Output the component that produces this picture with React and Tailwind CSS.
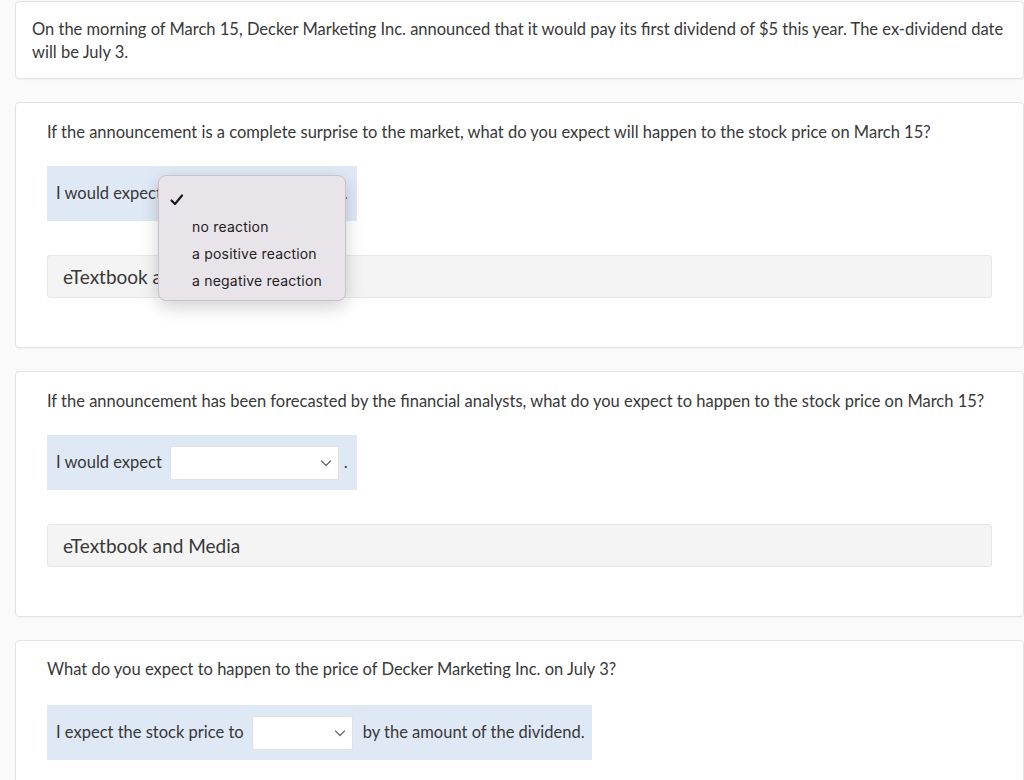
import React from 'react';

const Chevron = () => (
    <svg width="14" height="14" viewBox="0 0 14 14" className="absolute right-[5px] top-1/2 -translate-y-1/2" fill="none">
        <path d="M2.5 5 L7 9.5 L11.5 5" stroke="#666" strokeWidth="1.2" strokeLinecap="round" strokeLinejoin="round" />
    </svg>
);

const Select = ({ width }) => (
    <div className={`relative h-[34px] ${width} bg-white border border-[#e2e2e2] rounded-[2px]`}>
        <Chevron />
    </div>
);

const Card = ({ children, className = '' }) => (
    <div className={`relative bg-white border border-[#e3e3e3] rounded-[4px] shadow-[0_1px_2px_rgba(0,0,0,0.04)] ${className}`}>
        {children}
    </div>
);

const Media = () => (
    <div className="mt-[34px] mr-[31px] h-[43px] flex items-center pl-[15px] bg-[#f4f4f4] border border-[#e6e6e6] rounded-[3px] text-[19px] text-[#383838]">
        eTextbook and Media
    </div>
);

const Popup = () => (
    <div className="absolute left-[142px] top-[72px] w-[188px] h-[126px] bg-[#e9e4ea] border border-[#c8c3cb] rounded-[8px] shadow-[0_6px_18px_rgba(0,0,0,0.18)] pt-[10px] z-10 font-['Inter',sans-serif] text-[14px] text-[#222] tracking-[0.2px]">
        <div className="h-[27px] flex items-center pl-[10px]">
            <svg width="16" height="16" viewBox="0 0 16 16" fill="none">
                <path d="M2.5 8.5 L6 12 L13 3.5" stroke="#1a1a1a" strokeWidth="2.2" strokeLinecap="round" strokeLinejoin="round" />
            </svg>
        </div>
        {['no reaction', 'a positive reaction', 'a negative reaction'].map(t => (
            <div key={t} className="h-[27px] flex items-center pl-[33px]">{t}</div>
        ))}
    </div>
);

export default function App() {
    return (
        <div className="min-h-[780px] bg-[#fafafa] pl-[15px] pt-px flex flex-col gap-[23px] font-['Lato',sans-serif] text-[16.5px] leading-[23px] text-[#383838] overflow-hidden">
            <Card className="pl-[16px] pr-[12px] pt-[16px] pb-[14px]">
                <p>On the morning of March 15, Decker Marketing Inc. announced that it would pay its first dividend of $5 this year. The ex-dividend date will be July 3.</p>
            </Card>

            <Card className="pl-[31px] pt-[18px] pb-[49px]">
                <p>If the announcement is a complete surprise to the market, what do you expect will happen to the stock price on March 15?</p>
                <div className="mt-[22px] inline-flex items-center h-[55px] w-[310px] bg-[#dfe8f5] pl-[9px]">
                    <span>I would expect</span>
                    <div className="ml-[8px]"><Select width="w-[169px]" /></div>
                    <span className="ml-[5px]">.</span>
                </div>
                <Media />
                <Popup />
            </Card>

            <Card className="pl-[31px] pt-[18px] pb-[49px]">
                <p>If the announcement has been forecasted by the financial analysts, what do you expect to happen to the stock price on March 15?</p>
                <div className="mt-[22px] inline-flex items-center h-[55px] w-[310px] bg-[#dfe8f5] pl-[9px]">
                    <span>I would expect</span>
                    <div className="ml-[8px]"><Select width="w-[169px]" /></div>
                    <span className="ml-[5px]">.</span>
                </div>
                <Media />
            </Card>

            <Card className="pl-[31px] pt-[17px] pb-[40px]">
                <p>What do you expect to happen to the price of Decker Marketing Inc. on July 3?</p>
                <div className="mt-[24px] inline-flex items-center h-[55px] w-[545px] bg-[#dfe8f5] pl-[9px]">
                    <span>I expect the stock price to</span>
                    <div className="ml-[8px]"><Select width="w-[101px]" /></div>
                    <span className="ml-[10px]">by the amount of the dividend.</span>
                </div>
            </Card>
        </div>
    );
}
